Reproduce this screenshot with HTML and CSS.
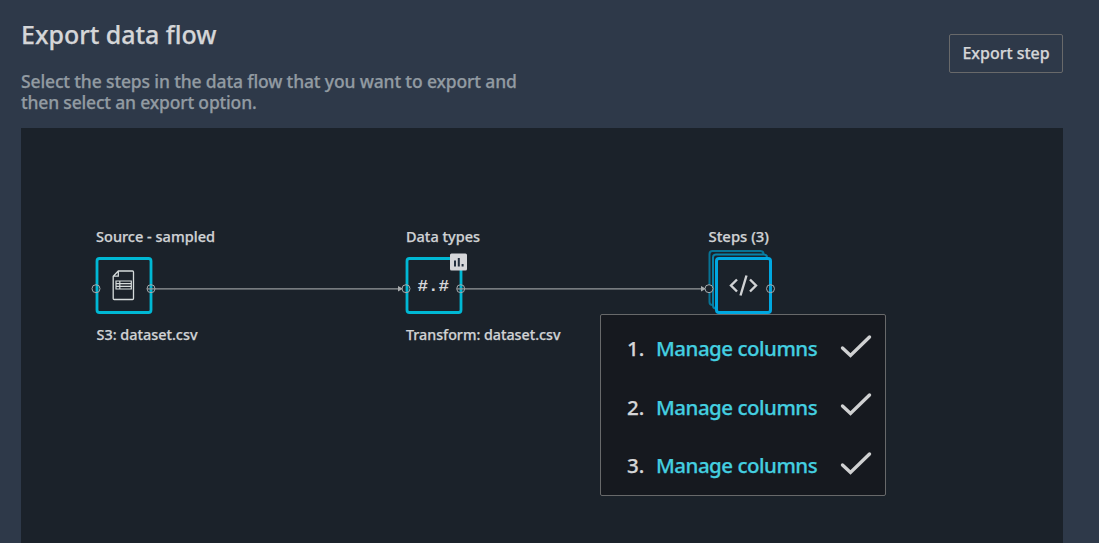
FILE: index.html
```html
<!DOCTYPE html>
<html lang="en">
<head>
<meta charset="utf-8">
<title>Export data flow</title>
<link rel="stylesheet" href="styles.css">
</head>
<body>
<main class="page">
  <header class="header">
    <div class="heading">
      <h1 class="title">Export data flow</h1>
      <div class="subtitle">
        <div class="line-one">Select the steps in the data flow that you want to export and</div>
        <div class="line-two">then select an export option.</div>
      </div>
    </div>
    <button class="export-button" type="button">Export step</button>
  </header>
  <section class="canvas">
    <svg class="flow" width="1042" height="415" viewBox="21 128 1042 415">
      <g class="labels">
        <text x="96" y="242" textLength="119" lengthAdjust="spacingAndGlyphs">Source - sampled</text>
        <text x="96.500" y="340" textLength="101" lengthAdjust="spacingAndGlyphs">S3: dataset.csv</text>
        <text x="406" y="242" textLength="74" lengthAdjust="spacingAndGlyphs">Data types</text>
        <text x="406" y="340" textLength="154.500" lengthAdjust="spacingAndGlyphs">Transform: dataset.csv</text>
        <text x="708.500" y="242" textLength="60.500" lengthAdjust="spacingAndGlyphs">Steps (3)</text>
      </g>
      <g class="node">
        <rect x="97" y="258.500" width="54" height="54" rx="2.500"/>
        <rect x="407" y="258.500" width="54" height="54" rx="2.500"/>
      </g>
      <g class="stack">
        <rect class="back" x="709.500" y="251" width="54" height="54" rx="3"/>
        <rect class="middle" x="713" y="254.500" width="54" height="54" rx="3"/>
        <rect class="front" x="716.500" y="258.500" width="54" height="54" rx="2.500"/>
      </g>
      <g class="edge">
        <path d="M147 288.800H400M457 288.800H703"/>
        <path class="arrow" d="M398 286L403 288.800L398 291.600ZM701 286L706 288.800L701 291.600Z"/>
      </g>
      <g class="port">
        <circle cx="96" cy="288.700" r="4"/>
        <circle cx="151" cy="288.700" r="4"/>
        <circle cx="406" cy="288.700" r="4"/>
        <circle cx="460.700" cy="288.700" r="4"/>
        <circle class="filled" cx="709" cy="288.700" r="4"/>
        <circle cx="770.500" cy="288.700" r="4"/>
      </g>
      <g class="file-icon">
        <path d="M118.300 271H132.500Q133.500 271 133.500 272V298.500Q133.500 299.500 132.500 299.500H114.200Q113.200 299.500 113.200 298.500V276.200ZM118.300 271V276.200H113.200"/>
        <path class="table" d="M116 281H131.300V289H116ZM116 283.700H131.300M116 286.300H131.300M119.800 281V289"/>
      </g>
      <text class="hash" x="417.500" y="291" textLength="31.500" lengthAdjust="spacingAndGlyphs">#.#</text>
      <rect class="badge" x="450" y="253.500" width="17" height="17" rx="1.500"/>
      <path class="bars" d="M455 260.500V266.500M458.800 258V266.500M462.600 264V266.500"/>
      <path class="code-icon" d="M737 279.500L731 285.500L737 291.500M750 279.500L756 285.500L750 291.500M746.500 275.500L740.500 295.500"/>
    </svg>
    <ol class="menu">
      <li class="item"><span class="number">1.</span><span class="name">Manage columns</span><svg class="check" width="32" height="26" viewBox="0 0 32 26"><path d="M2.500 14L10.500 21.500L29.500 3"/></svg></li>
      <li class="item"><span class="number">2.</span><span class="name">Manage columns</span><svg class="check" width="32" height="26" viewBox="0 0 32 26"><path d="M2.500 14L10.500 21.500L29.500 3"/></svg></li>
      <li class="item"><span class="number">3.</span><span class="name">Manage columns</span><svg class="check" width="32" height="26" viewBox="0 0 32 26"><path d="M2.500 14L10.500 21.500L29.500 3"/></svg></li>
    </ol>
  </section>
</main>
</body>
</html>
```
FILE: styles.css
```css
* { box-sizing: border-box; }
body {
  margin: 0;
  background: #2e3949;
  color: #d5d6d8;
  font-family: "Noto Sans", sans-serif;
  font-weight: 500;
  overflow: hidden;
  -webkit-text-stroke: 0.25px currentColor;
}
.page { height: 543px; padding: 0 36px 0 21px; }
.header {
  display: flex;
  justify-content: space-between;
  align-items: flex-start;
  height: 128px;
}
.title {
  margin: 16px 0 0;
  font-size: 25px;
  line-height: 36px;
  font-weight: 500;
  letter-spacing: -0.02px;
}
.subtitle {
  margin: 19px 0 0;
  color: #929ba2;
  font-size: 17.5px;
  line-height: 21px;
  white-space: nowrap;
  letter-spacing: -0.14px;
}
.line-two { letter-spacing: -0.18px; }
.export-button {
  width: 114px;
  height: 39px;
  margin-top: 34px;
  padding: 0 0 2px;
  border: 1px solid #68696a;
  border-radius: 2px;
  background: transparent;
  color: #d5d6d8;
  font: 500 16px "Noto Sans", sans-serif;
  letter-spacing: -0.02px;
  white-space: nowrap;
}
.canvas {
  position: relative;
  height: 415px;
  background: #1b222a;
}
.flow { display: block; }
.labels text { font-size: 14px; fill: #d0d2d4; stroke: #d0d2d4; stroke-width: 0.25px; }
.node rect { fill: none; stroke: #00b8d4; stroke-width: 2.8; }
.stack rect { fill: #1b222a; }
.stack .back { stroke: #087394; stroke-width: 2; }
.stack .middle { stroke: #0782a8; stroke-width: 2; }
.stack .front { stroke: #00a8e1; stroke-width: 3; }
.edge { stroke: #96999c; stroke-width: 1.2; fill: none; }
.edge .arrow { fill: #a8abad; stroke: none; }
.port circle { fill: none; stroke: #a4aaad; stroke-width: 1; }
.port .filled { fill: #1b222a; }
.file-icon { fill: none; stroke: #d5dbdb; stroke-width: 1.3; }
.file-icon .table { stroke-width: 1.2; }
.hash { font: 700 17px "Liberation Mono", monospace; fill: #d5d6d8; }
.badge { fill: #d5d6d9; }
.bars { fill: none; stroke: #232f3e; stroke-width: 2; }
.code-icon { fill: none; stroke: #d0d2d4; stroke-width: 2.4; }
.menu {
  position: absolute;
  left: 579px;
  top: 186px;
  width: 286px;
  height: 182px;
  margin: 0;
  padding: 4px 13px 0 26px;
  list-style: none;
  border: 1px solid #68696a;
  border-radius: 2px;
  background: #16191f;
}
.item {
  display: flex;
  align-items: center;
  height: 58.5px;
  font-size: 20.5px;
}
.number { width: 29px; }
.name { flex: 1; color: #44cfe0; white-space: nowrap; letter-spacing: -0.5px; }
.check { margin-top: -3px; fill: none; stroke: #d0d1d2; stroke-width: 3.4; stroke-linecap: round; }
```
